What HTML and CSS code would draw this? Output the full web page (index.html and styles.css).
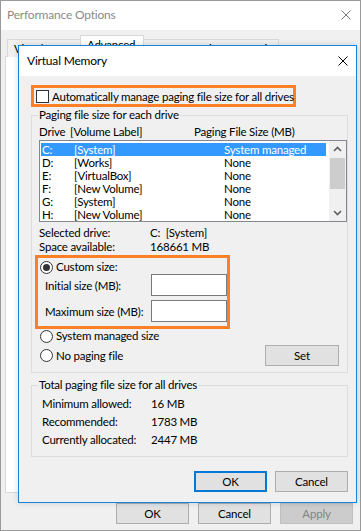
FILE: index.html
```html
<!DOCTYPE html>
<html lang="en">
<head>
    <meta charset="UTF-8">
    <title>Virtual Memory</title>
    <link rel="stylesheet" href="styles.css">
</head>
<body>
    <div class="win">
        <div class="win-title">
            <span class="win-caption">Performance Options</span>
            <svg class="close" width="10" height="10" viewBox="0 0 10 10"><path d="M0.5 0.5 L9.5 9.5 M9.5 0.5 L0.5 9.5" stroke="#777" stroke-width="1"/></svg>
        </div>
        <div class="win-body">
            <div class="tabs">
                <div class="tab">Visual Effects</div>
                <div class="tab tab-active">Advanced</div>
                <div class="tab">Data Execution Prevention</div>
            </div>
            <div class="tab-panel"></div>
            <div class="win-buttons">
                <button class="btn">OK</button>
                <button class="btn">Cancel</button>
                <button class="btn btn-disabled">Apply</button>
            </div>
        </div>
    </div>

    <!-- Virtual Memory dialog on top of Performance Options -->
    <div class="dialog">
        <div class="dlg-title">
            <span class="dlg-caption">Virtual Memory</span>
            <svg class="close" width="10" height="10" viewBox="0 0 10 10"><path d="M0.5 0.5 L9.5 9.5 M9.5 0.5 L0.5 9.5" stroke="#000" stroke-width="1"/></svg>
        </div>
        <div class="dlg-body">
            <div class="hl hl-auto">
                <span class="checkbox"></span>
                <span>Automatically manage paging file size for all drives</span>
            </div>

            <fieldset class="group group-drives">
                <legend>Paging file size for each drive</legend>
                <div class="list-head">
                    <span>Drive</span>
                    <span>[Volume Label]</span>
                    <span>Paging File Size (MB)</span>
                </div>
                <div class="listbox">
                    <div class="rows">
                        <div class="row selected"><span>C:</span><span>[System]</span><span>System managed</span></div>
                        <div class="row"><span>D:</span><span>[Works]</span><span>None</span></div>
                        <div class="row"><span>E:</span><span>[VirtualBox]</span><span>None</span></div>
                        <div class="row"><span>F:</span><span>[New Volume]</span><span>None</span></div>
                        <div class="row"><span>G:</span><span>[System]</span><span>None</span></div>
                        <div class="row"><span>H:</span><span>[New Volume]</span><span>None</span></div>
                    </div>
                    <div class="scrollbar">
                        <svg class="arrow" width="9" height="6" viewBox="0 0 9 6"><path d="M1 5 L4.5 1.5 L8 5" fill="none" stroke="#606060" stroke-width="1.6"/></svg>
                        <div class="thumb"></div>
                        <svg class="arrow" width="9" height="6" viewBox="0 0 9 6"><path d="M1 1 L4.5 4.5 L8 1" fill="none" stroke="#606060" stroke-width="1.6"/></svg>
                    </div>
                </div>
                <div class="info">
                    <div class="info-row"><span class="info-label">Selected drive:</span><span>C:&nbsp;&nbsp;[System]</span></div>
                    <div class="info-row"><span class="info-label">Space available:</span><span>168661 MB</span></div>
                </div>

                <div class="hl hl-custom">
                    <div class="radio-row"><span class="radio checked"></span><span>Custom size:</span></div>
                    <div class="field-row"><span class="field-label">Initial size (MB):</span><span class="input"></span></div>
                    <div class="field-row"><span class="field-label">Maximum size (MB):</span><span class="input"></span></div>
                </div>

                <div class="radio-row radio-plain"><span class="radio"></span><span>System managed size</span></div>
                <div class="set-row">
                    <div class="radio-row"><span class="radio"></span><span>No paging file</span></div>
                    <button class="btn btn-set">Set</button>
                </div>
            </fieldset>

            <fieldset class="group group-total">
                <legend>Total paging file size for all drives</legend>
                <div class="total-row"><span class="total-label">Minimum allowed:</span><span>16 MB</span></div>
                <div class="total-row"><span class="total-label">Recommended:</span><span>1783 MB</span></div>
                <div class="total-row"><span class="total-label">Currently allocated:</span><span>2447 MB</span></div>
            </fieldset>

            <div class="dlg-buttons">
                <button class="btn btn-default">OK</button>
                <button class="btn">Cancel</button>
            </div>
        </div>
    </div>
</body>
</html>
```

FILE: styles.css
```css
* {
    box-sizing: border-box;
}
body {
    margin: 0;
    font-family: Lato, "Noto Sans", sans-serif;
    font-size: 11.5px;
    letter-spacing: -0.2px;
    color: #000;
    background-color: #f0f0f0;
    white-space: nowrap;
}
button {
    font: inherit;
    letter-spacing: inherit;
}

/* Outer window: Performance Options */
.win {
    width: 361px;
    height: 531px;
    border: 1px solid #9a9a9a;
    background-color: #f0f0f0;
    display: flex;
    flex-direction: column;
    overflow: hidden;
}
.win-title {
    height: 29px;
    background-color: #fff;
    display: flex;
    align-items: center;
    justify-content: space-between;
    padding: 0 9px 2px 6px;
    flex-shrink: 0;
    font-size: 12px;
}
.win-caption {
    color: #8a8a8a;
}
.win-body {
    flex: 1;
    display: flex;
    flex-direction: column;
    padding: 0 7px 0 4px;
}
.tabs {
    display: flex;
    align-items: flex-end;
    height: 27px;
    padding-left: 2px;
    margin-bottom: -1px;
    position: relative;
    z-index: 1;
}
.tab {
    height: 18px;
    padding: 1px 6px 0 6px;
    border: 1px solid #d9d9d9;
    border-bottom: none;
    background-color: #f0f0f0;
    line-height: 16px;
    overflow: hidden;
}
.tab:first-child {
    width: 74px;
}
.tab:last-child {
    width: 136px;
}
.tab-active {
    height: 22px;
    width: 64px;
    margin: 0 -1px;
    background-color: #fff;
    position: relative;
    z-index: 1;
    padding-top: 1px;
}
.tab-panel {
    height: 437px;
    background-color: #fff;
    border: 1px solid #d9d9d9;
}
.win-buttons {
    display: flex;
    justify-content: flex-end;
    gap: 9px;
    margin-top: 10px;
}

/* Buttons */
.btn {
    width: 73px;
    height: 21px;
    padding: 0;
    background-color: #e1e1e1;
    border: 1px solid #adadad;
    color: #000;
    line-height: 17px;
}
.btn-disabled {
    background-color: #cccccc;
    border-color: #bfbfbf;
    color: #838383;
}
.btn-default {
    border: 2px solid #0078d7;
}
.btn-set {
    width: 74px;
    margin-right: 8px;
}

/* Virtual Memory dialog */
.dialog {
    position: absolute;
    z-index: 10;
    left: 18px;
    top: 45px;
    width: 339px;
    height: 458px;
    border: 1px solid #1883d7;
    background-color: #f0f0f0;
    box-shadow: 0 0 6px rgba(0, 0, 0, 0.15);
}
.dlg-title {
    height: 30px;
    background-color: #fff;
    display: flex;
    align-items: center;
    justify-content: space-between;
    padding: 0 8px 1px 8px;
    font-size: 12px;
}
.dlg-body {
    padding: 9px 8px 0 12px;
}
.hl {
    border: 3px solid #fd8026;
}
.hl-auto {
    width: 265px;
    height: 22px;
    display: flex;
    align-items: center;
    gap: 3px;
    padding-left: 2px;
}
.checkbox {
    width: 13px;
    height: 13px;
    border: 1px solid #333;
    background-color: #fff;
    flex-shrink: 0;
}

/* Group boxes */
.group {
    margin: 0;
    border: 1px solid #dcdcdc;
    padding: 0 0 6px 7px;
    min-width: 0;
}
.group legend {
    padding: 0 1px;
    margin-left: -1px;
    line-height: 16px;
}
.list-head {
    display: grid;
    grid-template-columns: 31px 124px 1fr;
    height: 16px;
    line-height: 16px;
    margin-top: 1px;
}
.listbox {
    display: flex;
    height: 82px;
    border: 1px solid #828790;
    background-color: #fff;
}
.rows {
    flex: 1;
    padding: 2px 3px 0 1px;
}
.row {
    display: grid;
    grid-template-columns: 32px 150px 1fr;
    height: 13px;
    line-height: 13px;
    padding-left: 1px;
}
.row.selected {
    background-color: #3399ff;
    color: #fff;
}
.scrollbar {
    width: 17px;
    display: flex;
    flex-direction: column;
    align-items: center;
    background-color: #f0f0f0;
}
.arrow {
    margin: 5px 0;
}
.thumb {
    width: 15px;
    flex: 1;
    background-color: #cdcdcd;
    margin: 1px 0 16px;
}
.info {
    margin-top: 4px;
}
.info-row {
    display: flex;
    height: 14px;
    line-height: 14px;
}
.info-label {
    width: 111px;
}
.hl-custom {
    width: 195px;
    margin: 1px 0 0 -4px;
    padding: 2px 0 4px 2px;
}
.radio-row {
    display: flex;
    align-items: center;
    gap: 3px;
    height: 14px;
    line-height: 14px;
}
.radio {
    width: 13px;
    height: 13px;
    border: 1px solid #333;
    border-radius: 50%;
    background-color: #fff;
    flex-shrink: 0;
    display: flex;
    align-items: center;
    justify-content: center;
}
.radio.checked::after {
    content: "";
    width: 7px;
    height: 7px;
    border-radius: 50%;
    background-color: #333;
}
.field-row {
    display: flex;
    align-items: center;
    height: 22px;
    margin-top: 4px;
    padding-left: 5px;
}
.field-row:nth-child(2) {
    margin-top: 0;
}
.field-label {
    width: 107px;
}
.input {
    width: 76px;
    height: 22px;
    border: 1px solid #7a7a7a;
    background-color: #fff;
}
.radio-plain {
    margin-top: 0;
    padding-left: 1px;
}
.set-row {
    display: flex;
    align-items: center;
    justify-content: space-between;
    margin-top: 2px;
    padding-left: 1px;
}
.group-total {
    margin-top: 4px;
    padding-bottom: 7px;
}
.total-row {
    display: flex;
    height: 18px;
    line-height: 18px;
    padding-left: 3px;
}
.total-row:first-of-type {
    margin-top: 2px;
}
.total-label {
    width: 109px;
}
.dlg-buttons {
    display: flex;
    justify-content: flex-end;
    gap: 8px;
    margin-top: 14px;
}
```
